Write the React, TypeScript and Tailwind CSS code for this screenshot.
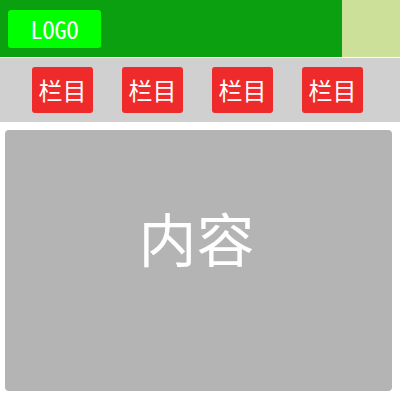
export default function App() {
  const navItems = ["栏目", "栏目", "栏目", "栏目"];

  return (
    <div className="w-[400px] h-[400px] bg-white flex flex-col font-['Noto_Sans_CJK_SC',sans-serif]">
      <header className="h-[57px] flex bg-[#0aa00f]">
        <div className="flex-1 flex items-center pl-2">
          <div className="w-[93px] h-[38px] rounded-[3px] bg-[#00ff00] flex items-center justify-center text-white text-[24px] leading-none font-['Noto_Sans_Mono_CJK_SC','DejaVu_Sans_Mono',monospace]">
            LOGO
          </div>
        </div>
        <div className="w-[58px] bg-[#cde09a]" />
      </header>

      <nav className="mt-px h-[64px] bg-[#d0d0d0] flex items-center gap-[29px] pl-8">
        {navItems.map((label, i) => (
          <button
            key={i}
            className="w-[61px] h-[46px] rounded-[3px] bg-[#ee2a2a] text-white text-[24px] leading-none flex items-center justify-center"
          >
            {label}
          </button>
        ))}
      </nav>

      <main className="mt-2 ml-[5px] w-[387px] h-[261px] rounded-[4px] bg-[#b4b4b4] flex justify-center pt-[78px] pr-1">
        <span className="text-white text-[58px] leading-none">内容</span>
      </main>
    </div>
  );
}
